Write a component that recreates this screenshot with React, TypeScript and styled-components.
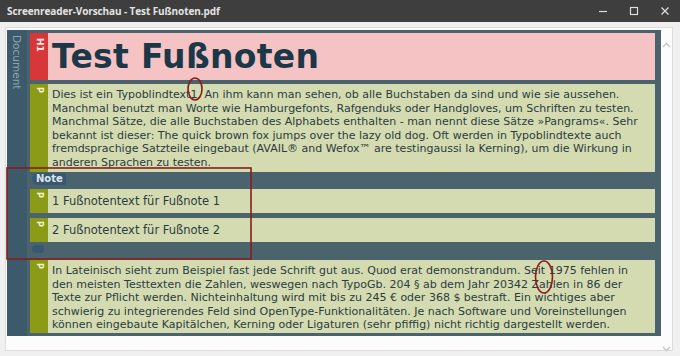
import React from "react";
import styled, { createGlobalStyle } from "styled-components";

const Global = createGlobalStyle`
  html, body { margin: 0; padding: 0; background: #f0f0f0; }
  body { width: 680px; height: 356px; overflow: hidden; font-family: "DejaVu Sans", Verdana, sans-serif; }
`;

const Window = styled.div`
  position: relative;
  width: 680px;
  height: 356px;
  background: #f0f0f0;
`;

const TitleBar = styled.div`
  height: 22px;
  background: #3e3e3e;
  display: flex;
  align-items: center;
  justify-content: space-between;
  padding: 0 0 0 7px;
`;

const Title = styled.div`
  font-family: "Open Sans", "DejaVu Sans", sans-serif;
  font-weight: 700;
  font-size: 10px;
  color: #e4e4e4;
  letter-spacing: -0.1px;
`;

const Controls = styled.div`
  display: flex;
  height: 22px;
`;

const CtrlBtn = styled.div`
  width: 31px;
  height: 22px;
  display: flex;
  align-items: center;
  justify-content: center;
  color: #dcdcdc;
`;

const ScrollView = styled.div`
  margin: 5px 7px 0 5px;
  height: 320px;
  border: 1px solid #dcdcdc;
  background: #fcfcfc;
  display: flex;
  padding: 2px 0 0 1px;
`;

const Panel = styled.div`
  width: 654px;
  height: 306px;
  display: flex;
  background: #4b636c;
`;

const Sidebar = styled.div`
  width: 20px;
  background: #3d5a6a;
  display: flex;
  justify-content: center;
  padding-top: 5px;
  box-sizing: border-box;
`;

const SideLabel = styled.div`
  writing-mode: vertical-rl;
  font-size: 10.5px;
  color: #8ba5b4;
  font-family: "DejaVu Sans", sans-serif;
`;

const Main = styled.div`
  flex: 1;
  display: flex;
  flex-direction: column;
  padding: 3px 6px 3px 3px;
  gap: 4px;
`;

type Kind = "h1" | "p";

const Block = styled.div<{ $kind: Kind; $h?: number }>`
  display: flex;
  height: ${(p) => (p.$h ? `${p.$h}px` : "auto")};
  background: ${(p) => (p.$kind === "h1" ? "#f5c3c4" : "#d5dbb0")};
  flex-shrink: 0;
`;

const Badge = styled.div<{ $kind: Kind }>`
  width: 18px;
  flex-shrink: 0;
  background: ${(p) => (p.$kind === "h1" ? "#d8373a" : "#8c9b17")};
  display: flex;
  justify-content: center;
  padding-top: ${(p) => (p.$kind === "h1" ? "5px" : "3px")};
  box-sizing: border-box;
`;

const BadgeText = styled.span<{ $kind: Kind }>`
  writing-mode: vertical-rl;
  font-size: ${(p) => (p.$kind === "h1" ? "9px" : "8px")};
  font-weight: 700;
  color: ${(p) => (p.$kind === "h1" ? "#fde8e8" : "#f2f4c8")};
  line-height: 1;
`;

const H1Text = styled.div`
  font-family: "DejaVu Sans", Verdana, sans-serif;
  font-weight: 700;
  font-size: 33px;
  color: #1b3848;
  display: flex;
  align-items: center;
  padding-left: 4px;
  letter-spacing: 0.3px;
`;

const PText = styled.div<{ $pad?: string }>`
  font-size: 11px;
  line-height: 13.6px;
  color: #2a3b41;
  padding: ${(p) => p.$pad || "4px 0 0 4px"};
  white-space: nowrap;
`;

const FootText = styled.div`
  font-size: 11.5px;
  color: #2a3b41;
  display: flex;
  align-items: center;
  padding-left: 4px;
`;

const Note = styled.div`
  display: flex;
  flex-direction: column;
  height: 83px;
  margin-top: -3px;
  flex-shrink: 0;
`;

const NoteLabel = styled.div`
  align-self: flex-start;
  margin: 0 0 0 2px;
  height: 12px;
  padding: 0 3px 0 4px;
  background: #385770;
  border-radius: 6px 0 0 6px;
  color: #dfe6ee;
  font-size: 10px;
  font-weight: 700;
  line-height: 12px;
`;

const NoteItems = styled.div`
  display: flex;
  flex-direction: column;
  gap: 5px;
  margin-top: 4px;
`;

const NoteEnd = styled.div`
  width: 12px;
  height: 8px;
  margin: 3px 0 0 2px;
  background: #385770;
  border-radius: 6px 4px 4px 6px;
`;

const ScrollBar = styled.div`
  width: 11px;
  display: flex;
  flex-direction: column;
  justify-content: space-between;
  align-items: center;
  padding: 12px 0 0 0;
  height: 310px;
`;

const Overlay = styled.svg`
  position: absolute;
  left: 0;
  top: 0;
  pointer-events: none;
`;

const Chevron = ({ up }: { up?: boolean }) => (
  <svg width="9" height="6" viewBox="0 0 9 6">
    <path d={up ? "M1 5 L4.5 1.5 L8 5" : "M1 1 L4.5 4.5 L8 1"} fill="none" stroke="#c4c4c4" strokeWidth="1.3" />
  </svg>
);

const p1 = [
  "Dies ist ein Typoblindtext1. An ihm kann man sehen, ob alle Buchstaben da sind und wie sie aussehen.",
  "Manchmal benutzt man Worte wie Hamburgefonts, Rafgenduks oder Handgloves, um Schriften zu testen.",
  "Manchmal Sätze, die alle Buchstaben des Alphabets enthalten - man nennt diese Sätze »Pangrams«. Sehr",
  "bekannt ist dieser: The quick brown fox jumps over the lazy old dog. Oft werden in Typoblindtexte auch",
  "fremdsprachige Satzteile eingebaut (AVAIL® and Wefox™ are testingaussi la Kerning), um die Wirkung in",
  "anderen Sprachen zu testen.",
];

const p3 = [
  "In Lateinisch sieht zum Beispiel fast jede Schrift gut aus. Quod erat demonstrandum. Seit 1975 fehlen in",
  "den meisten Testtexten die Zahlen, weswegen nach TypoGb. 204 § ab dem Jahr 20342 Zahlen in 86 der",
  "Texte zur Pflicht werden. Nichteinhaltung wird mit bis zu 245 € oder 368 $ bestraft. Ein wichtiges aber",
  "schwierig zu integrierendes Feld sind OpenType-Funktionalitäten. Je nach Software und Voreinstellungen",
  "können eingebaute Kapitälchen, Kerning oder Ligaturen (sehr pfiffig) nicht richtig dargestellt werden.",
];

const Lines = ({ lines }: { lines: string[] }) => (
  <>
    {lines.map((l, i) => (
      <React.Fragment key={i}>
        {l}
        {i < lines.length - 1 && <br />}
      </React.Fragment>
    ))}
  </>
);

export default function App() {
  return (
    <Window>
      <Global />
      <TitleBar>
        <Title>Screenreader-Vorschau - Test Fußnoten.pdf</Title>
        <Controls>
          <CtrlBtn>
            <svg width="10" height="10" viewBox="0 0 10 10">
              <path d="M1 5.5 H9" stroke="#dcdcdc" strokeWidth="1.2" />
            </svg>
          </CtrlBtn>
          <CtrlBtn>
            <svg width="10" height="10" viewBox="0 0 10 10">
              <rect x="1.5" y="1.5" width="7" height="7" fill="none" stroke="#dcdcdc" strokeWidth="1.2" />
            </svg>
          </CtrlBtn>
          <CtrlBtn>
            <svg width="10" height="10" viewBox="0 0 10 10">
              <path d="M1.5 1.5 L8.5 8.5 M8.5 1.5 L1.5 8.5" stroke="#dcdcdc" strokeWidth="1.3" />
            </svg>
          </CtrlBtn>
        </Controls>
      </TitleBar>
      <ScrollView>
        <Panel>
          <Sidebar>
            <SideLabel>Document</SideLabel>
          </Sidebar>
          <Main>
            <Block $kind="h1" $h={47}>
              <Badge $kind="h1">
                <BadgeText $kind="h1">H1</BadgeText>
              </Badge>
              <H1Text>Test Fußnoten</H1Text>
            </Block>
            <Block $kind="p" $h={88}>
              <Badge $kind="p">
                <BadgeText $kind="p">P</BadgeText>
              </Badge>
              <PText>
                <Lines lines={p1} />
              </PText>
            </Block>
            <Note>
              <NoteLabel>Note</NoteLabel>
              <NoteItems>
                <Block $kind="p" $h={24}>
                  <Badge $kind="p">
                    <BadgeText $kind="p">P</BadgeText>
                  </Badge>
                  <FootText>1 Fußnotentext für Fußnote 1</FootText>
                </Block>
                <Block $kind="p" $h={24}>
                  <Badge $kind="p">
                    <BadgeText $kind="p">P</BadgeText>
                  </Badge>
                  <FootText>2 Fußnotentext für Fußnote 2</FootText>
                </Block>
              </NoteItems>
              <NoteEnd />
            </Note>
            <Block $kind="p" $h={73}>
              <Badge $kind="p">
                <BadgeText $kind="p">P</BadgeText>
              </Badge>
              <PText $pad="4px 0 0 4px">
                <Lines lines={p3} />
              </PText>
            </Block>
          </Main>
        </Panel>
        <ScrollBar>
          <Chevron up />
          <Chevron />
        </ScrollBar>
      </ScrollView>
      <Overlay width="680" height="356" viewBox="0 0 680 356">
        <rect x="7" y="168" width="244" height="91" fill="none" stroke="#8a1c1c" strokeWidth="1.6" />
        <ellipse cx="195" cy="89" rx="7" ry="11" fill="none" stroke="#8a1c1c" strokeWidth="1.6" />
        <ellipse cx="544" cy="277" rx="8.5" ry="16" fill="none" stroke="#8a1c1c" strokeWidth="1.6" />
      </Overlay>
    </Window>
  );
}
